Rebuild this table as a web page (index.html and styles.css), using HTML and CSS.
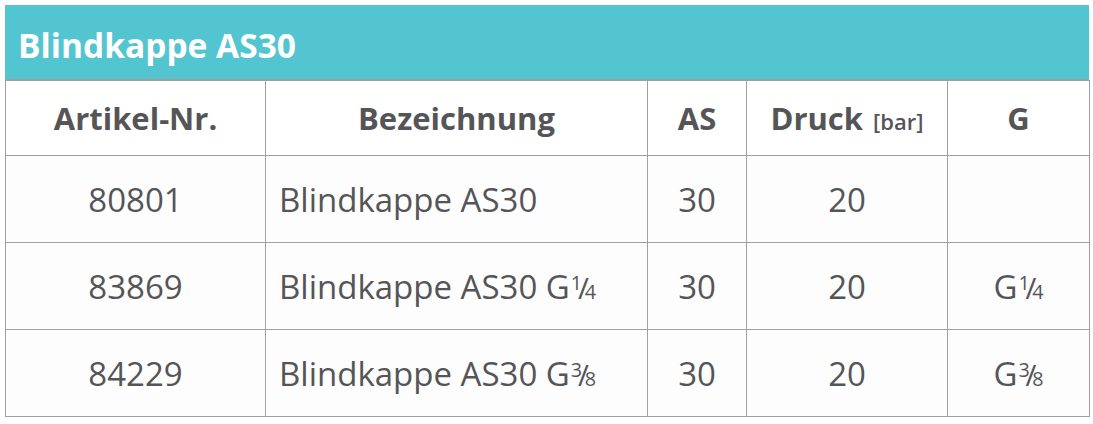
FILE: index.html
```html
<!DOCTYPE html>
<html lang="de">
<head>
<meta charset="utf-8">
<title>Blindkappe AS30</title>
<link rel="stylesheet" href="styles.css">
</head>
<body>
<div class="card">
  <div class="title">Blindkappe AS30</div>
  <table class="spec">
    <colgroup>
      <col class="c1"><col class="c2"><col class="c3"><col class="c4"><col class="c5">
    </colgroup>
    <thead>
      <tr>
        <th>Artikel-Nr.</th>
        <th>Bezeichnung</th>
        <th>AS</th>
        <th>Druck <span class="unit">[bar]</span></th>
        <th>G</th>
      </tr>
    </thead>
    <tbody>
      <tr><td>80801</td><td class="name">Blindkappe AS30</td><td>30</td><td>20</td><td></td></tr>
      <tr><td>83869</td><td class="name">Blindkappe AS30 G<span class="frac"><span class="num">1</span><span class="sl">/</span><span class="den">4</span></span></td><td>30</td><td>20</td><td>G<span class="frac"><span class="num">1</span><span class="sl">/</span><span class="den">4</span></span></td></tr>
      <tr><td>84229</td><td class="name">Blindkappe AS30 G<span class="frac"><span class="num">3</span><span class="sl">/</span><span class="den">8</span></span></td><td>30</td><td>20</td><td>G<span class="frac"><span class="num">3</span><span class="sl">/</span><span class="den">8</span></span></td></tr>
    </tbody>
  </table>
</div>
</body>
</html>
```
FILE: styles.css
```css
html, body {
  margin: 0;
  padding: 0;
  background: #ffffff;
}
body {
  padding: 5px 4px 0 5px;
  font-family: "Open Sans", "Noto Sans", sans-serif;
  color: #555558;
}
.card {
  width: 1084px;
}
.title {
  background: #53c5d0;
  color: #ffffff;
  font-weight: 700;
  font-size: 33.5px;
  height: 74px;
  line-height: 80px;
  padding-left: 13px;
  border-bottom: 1px solid #a0a0a0;
  box-sizing: content-box;
}
.spec {
  width: 1084px;
  border-collapse: collapse;
  table-layout: fixed;
  border: 1px solid #a0a0a0;
  border-top: none;
}
.c1 { width: 260px; }
.c2 { width: 382px; }
.c3 { width: 99px; }
.c4 { width: 201px; }
.c5 { width: 142px; }
.spec th, .spec td {
  border: 1px solid #a0a0a0;
  text-align: center;
  padding: 0;
  line-height: 1.2;
}
.spec th {
  height: 72px;
  font-size: 31px;
  font-weight: 700;
  background: #ffffff;
  padding-top: 2px;
}
.spec td {
  height: 85px;
  font-size: 33px;
  font-weight: 400;
  background: #fdfdfd;
  padding-top: 1px;
}
.spec td.name {
  text-align: left;
  padding-left: 13px;
}
.unit {
  font-size: 22px;
  font-weight: 600;
  margin-left: 2px;
}
.frac {
  display: inline-block;
  margin-left: 1px;
}
.frac .num {
  font-size: 0.6em;
  vertical-align: 0.45em;
}
.frac .sl {
  font-size: 0.9em;
  margin: 0 -0.14em;
}
.frac .den {
  font-size: 0.6em;
}
```
